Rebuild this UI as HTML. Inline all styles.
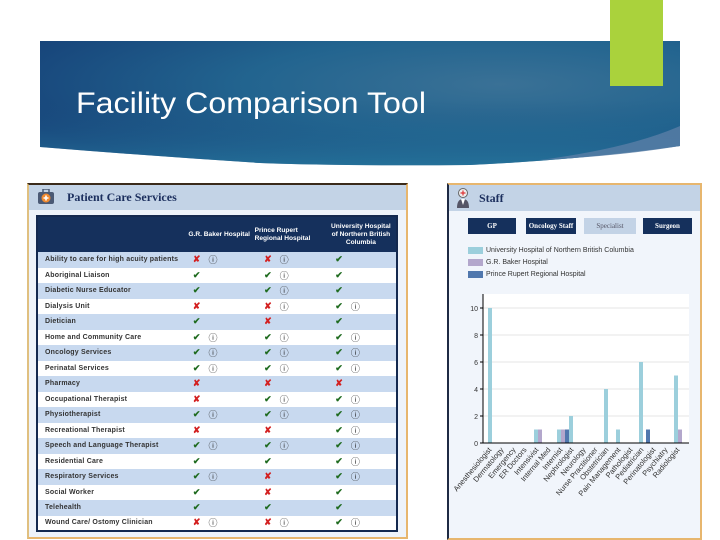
<!DOCTYPE html>
<html><head><meta charset="utf-8"><style>
*{margin:0;padding:0;box-sizing:border-box}
body{width:720px;height:540px;background:#fff;position:relative;overflow:hidden;font-family:"Liberation Sans",sans-serif}
.abs{position:absolute}
#lp{left:27px;top:183px;width:381px;height:356px;background:#eef3fa;border:2px solid #e7b66e;border-top:2px solid #3a2a1a;border-left:2px solid #e0c080}
#lph{left:29px;top:185px;width:377px;height:25px;background:#c3d3e6}
table{position:absolute;left:36px;top:215px;width:362px;border-collapse:collapse;border:2px solid #14294f;font-size:7px}
th{background:#15305c;color:#fff;height:36px;font-size:6.6px;font-weight:bold;text-align:center;line-height:8px}
td{height:15.5px;color:#222;padding:0}
tr.a td{background:#c8d9ef}
tr.b td{background:#fff}
td.l{padding-left:7px;font-weight:bold;color:#333;letter-spacing:.2px}
.c{width:17px;text-align:right;font-weight:bold;font-size:9px}
.i{width:54px;padding-left:8px;font-size:9px;color:#222}
.ok{color:#1f6b1f}.no{color:#d32020}
#rp{left:447px;top:183px;width:255px;height:357px;background:#f1f5fb;border:2px solid #e7b66e;border-left:2px solid #1e2a44}
#rph{left:449px;top:185px;width:251px;height:26px;background:#c3d3e6}
.btn{position:absolute;top:218px;height:16px;background:#15305c;color:#fff;font-family:"Liberation Serif",serif;font-size:7px;font-weight:bold;text-align:center;line-height:16px}
.lg{position:absolute;left:468px;width:15px;height:7px}
.lt{position:absolute;left:486px;font-size:7px;color:#333;line-height:9px}
</style></head><body>
<svg class="abs" style="left:0;top:0" width="720" height="180">
<defs><radialGradient id="g" cx="0.72" cy="0.35" r="0.8"><stop offset="0" stop-color="#3a7196"/><stop offset="0.5" stop-color="#22648f"/><stop offset="1" stop-color="#17447a"/></radialGradient>
<linearGradient id="g2" x1="0" y1="0" x2="0" y2="1"><stop offset="0" stop-color="#1b4f80" stop-opacity="0"/><stop offset="1" stop-color="#2a86a8" stop-opacity=".6"/></linearGradient></defs>
<path d="M40 41 H680 V146 Q580 160 470 165 Q340 166 260 163 Q150 156 40 147 Z" fill="url(#g)"/>
<path d="M40 100 H680 V146 Q580 160 470 165 Q340 166 260 163 Q150 156 40 147 Z" fill="url(#g2)"/>
<path d="M540 160 Q630 148 680 126 V146 Q620 156 540 160Z" fill="#5a7ea6" opacity=".8"/>
<rect x="610" y="0" width="53" height="86" fill="#aad23c"/>
<text x="76" y="113" fill="#fff" font-family="Liberation Sans" font-size="30" textLength="350" lengthAdjust="spacingAndGlyphs">Facility Comparison Tool</text>
</svg>

<div id="lp" class="abs"></div><div id="lph" class="abs"></div>
<svg class="abs" style="left:37px;top:189px" width="18" height="16"><rect x="1" y="3" width="16" height="12" rx="2" fill="#4b5a75"/><rect x="6" y="0" width="6" height="4" fill="none" stroke="#4b5a75" stroke-width="1.5"/><circle cx="9" cy="9" r="4.5" fill="#f08a30"/><path d="M9 6.5v5M6.5 9h5" stroke="#fff" stroke-width="1.6"/></svg>
<div class="abs" style="left:67px;top:190px;font-family:'Liberation Serif',serif;font-weight:bold;font-size:12px;color:#1c2f5e">Patient Care Services</div>

<table>
<tr><th style="width:146px"></th><th colspan="2" style="text-align:left;padding-left:5px">G.R. Baker Hospital</th><th colspan="2" style="text-align:left;padding-left:0">Prince Rupert<br>Regional Hospital</th><th colspan="2">University Hospital<br>of Northern British<br>Columbia</th></tr>
<tr class="a"><td class="l">Ability to care for high acuity patients</td><td class="c no">✘</td><td class="i">ⓘ</td><td class="c no">✘</td><td class="i">ⓘ</td><td class="c ok">✔</td><td class="i"></td></tr>
<tr class="b"><td class="l">Aboriginal Liaison</td><td class="c ok">✔</td><td class="i"></td><td class="c ok">✔</td><td class="i">ⓘ</td><td class="c ok">✔</td><td class="i"></td></tr>
<tr class="a"><td class="l">Diabetic Nurse Educator</td><td class="c ok">✔</td><td class="i"></td><td class="c ok">✔</td><td class="i">ⓘ</td><td class="c ok">✔</td><td class="i"></td></tr>
<tr class="b"><td class="l">Dialysis Unit</td><td class="c no">✘</td><td class="i"></td><td class="c no">✘</td><td class="i">ⓘ</td><td class="c ok">✔</td><td class="i">ⓘ</td></tr>
<tr class="a"><td class="l">Dietician</td><td class="c ok">✔</td><td class="i"></td><td class="c no">✘</td><td class="i"></td><td class="c ok">✔</td><td class="i"></td></tr>
<tr class="b"><td class="l">Home and Community Care</td><td class="c ok">✔</td><td class="i">ⓘ</td><td class="c ok">✔</td><td class="i">ⓘ</td><td class="c ok">✔</td><td class="i">ⓘ</td></tr>
<tr class="a"><td class="l">Oncology Services</td><td class="c ok">✔</td><td class="i">ⓘ</td><td class="c ok">✔</td><td class="i">ⓘ</td><td class="c ok">✔</td><td class="i">ⓘ</td></tr>
<tr class="b"><td class="l">Perinatal Services</td><td class="c ok">✔</td><td class="i">ⓘ</td><td class="c ok">✔</td><td class="i">ⓘ</td><td class="c ok">✔</td><td class="i">ⓘ</td></tr>
<tr class="a"><td class="l">Pharmacy</td><td class="c no">✘</td><td class="i"></td><td class="c no">✘</td><td class="i"></td><td class="c no">✘</td><td class="i"></td></tr>
<tr class="b"><td class="l">Occupational Therapist</td><td class="c no">✘</td><td class="i"></td><td class="c ok">✔</td><td class="i">ⓘ</td><td class="c ok">✔</td><td class="i">ⓘ</td></tr>
<tr class="a"><td class="l">Physiotherapist</td><td class="c ok">✔</td><td class="i">ⓘ</td><td class="c ok">✔</td><td class="i">ⓘ</td><td class="c ok">✔</td><td class="i">ⓘ</td></tr>
<tr class="b"><td class="l">Recreational Therapist</td><td class="c no">✘</td><td class="i"></td><td class="c no">✘</td><td class="i"></td><td class="c ok">✔</td><td class="i">ⓘ</td></tr>
<tr class="a"><td class="l">Speech and Language Therapist</td><td class="c ok">✔</td><td class="i">ⓘ</td><td class="c ok">✔</td><td class="i">ⓘ</td><td class="c ok">✔</td><td class="i">ⓘ</td></tr>
<tr class="b"><td class="l">Residential Care</td><td class="c ok">✔</td><td class="i"></td><td class="c ok">✔</td><td class="i"></td><td class="c ok">✔</td><td class="i">ⓘ</td></tr>
<tr class="a"><td class="l">Respiratory Services</td><td class="c ok">✔</td><td class="i">ⓘ</td><td class="c no">✘</td><td class="i"></td><td class="c ok">✔</td><td class="i">ⓘ</td></tr>
<tr class="b"><td class="l">Social Worker</td><td class="c ok">✔</td><td class="i"></td><td class="c no">✘</td><td class="i"></td><td class="c ok">✔</td><td class="i"></td></tr>
<tr class="a"><td class="l">Telehealth</td><td class="c ok">✔</td><td class="i"></td><td class="c ok">✔</td><td class="i"></td><td class="c ok">✔</td><td class="i"></td></tr>
<tr class="b"><td class="l">Wound Care/ Ostomy Clinician</td><td class="c no">✘</td><td class="i">ⓘ</td><td class="c no">✘</td><td class="i">ⓘ</td><td class="c ok">✔</td><td class="i">ⓘ</td></tr>
</table>

<div id="rp" class="abs"></div><div id="rph" class="abs"></div>
<svg class="abs" style="left:455px;top:187px" width="16" height="22"><circle cx="8" cy="6" r="4.5" fill="#eee" stroke="#666"/><path d="M8 3.5v5M5.5 6h5" stroke="#d33" stroke-width="1.2"/><path d="M2 21 Q2 12 8 12 Q14 12 14 21Z" fill="#556"/><path d="M6 12 L8 18 L10 12" fill="#fff"/></svg>
<div class="abs" style="left:479px;top:191px;font-family:'Liberation Serif',serif;font-weight:bold;font-size:12px;color:#1c2f5e">Staff</div>
<div class="btn" style="left:468px;width:48px">GP</div>
<div class="btn" style="left:526px;width:50px">Oncology Staff</div>
<div class="btn" style="left:584px;width:52px;background:#c3d3e6;color:#556;font-weight:normal">Specialist</div>
<div class="btn" style="left:643px;width:49px">Surgeon</div>
<div class="lg" style="top:247px;background:#9ccfdc"></div><div class="lt" style="top:246px">University Hospital of Northern British Columbia</div>
<div class="lg" style="top:259px;background:#b3a7cc"></div><div class="lt" style="top:258px">G.R. Baker Hospital</div>
<div class="lg" style="top:271px;background:#5077ad"></div><div class="lt" style="top:270px">Prince Rupert Regional Hospital</div>

<svg class="abs" style="left:447px;top:290px" width="255" height="250" font-family="Liberation Sans" font-size="7" fill="#333">
<rect x="36" y="4" width="206" height="149" fill="#fff"/>
<g stroke="#e4e4e4"><line x1="36" y1="18" x2="242" y2="18"/><line x1="36" y1="45" x2="242" y2="45"/><line x1="36" y1="72" x2="242" y2="72"/><line x1="36" y1="99" x2="242" y2="99"/><line x1="36" y1="126" x2="242" y2="126"/></g>
<g fill="#9ccfdc"><rect x="41" y="18" width="4" height="135"/><rect x="87" y="139.5" width="4" height="13.5"/><rect x="110" y="139.5" width="4" height="13.5"/><rect x="122" y="126" width="4" height="27"/><rect x="157" y="99" width="4" height="54"/><rect x="169" y="139.5" width="4" height="13.5"/><rect x="192" y="72" width="4" height="81"/><rect x="227" y="85.5" width="4" height="67.5"/></g>
<g fill="#b3a7cc"><rect x="91" y="139.5" width="4" height="13.5"/><rect x="114" y="139.5" width="4" height="13.5"/><rect x="231" y="139.5" width="4" height="13.5"/></g>
<g fill="#5077ad"><rect x="118" y="139.5" width="4" height="13.5"/><rect x="199" y="139.5" width="4" height="13.5"/></g>
<line x1="36" y1="4" x2="36" y2="153" stroke="#000"/><line x1="36" y1="153" x2="242" y2="153" stroke="#000"/>
<g stroke="#000"><line x1="33" y1="18" x2="36" y2="18"/><line x1="33" y1="45" x2="36" y2="45"/><line x1="33" y1="72" x2="36" y2="72"/><line x1="33" y1="99" x2="36" y2="99"/><line x1="33" y1="126" x2="36" y2="126"/><line x1="33" y1="153" x2="36" y2="153"/></g>
<g text-anchor="end"><text x="31" y="21">10</text><text x="31" y="48">8</text><text x="31" y="75">6</text><text x="31" y="102">4</text><text x="31" y="129">2</text><text x="31" y="156">0</text></g>
<g text-anchor="end" font-size="7.5">
<text transform="translate(45,160) rotate(-50)">Anesthesiologist</text>
<text transform="translate(57,160) rotate(-50)">Dermatology</text>
<text transform="translate(69,160) rotate(-50)">Emergency</text>
<text transform="translate(80,160) rotate(-50)">ER Doctors</text>
<text transform="translate(92,160) rotate(-50)">Intensivist</text>
<text transform="translate(104,160) rotate(-50)">Internal Med</text>
<text transform="translate(116,160) rotate(-50)">Internist</text>
<text transform="translate(127,160) rotate(-50)">Nephrologist</text>
<text transform="translate(139,160) rotate(-50)">Neurology</text>
<text transform="translate(151,160) rotate(-50)">Nurse Practitioner</text>
<text transform="translate(162,160) rotate(-50)">Obstetrician</text>
<text transform="translate(174,160) rotate(-50)">Pain Management</text>
<text transform="translate(186,160) rotate(-50)">Pathologist</text>
<text transform="translate(197,160) rotate(-50)">Pediatrician</text>
<text transform="translate(209,160) rotate(-50)">Perinatologist</text>
<text transform="translate(221,160) rotate(-50)">Psychiatry</text>
<text transform="translate(233,160) rotate(-50)">Radiologist</text>
</g>
</svg>
</body></html>
